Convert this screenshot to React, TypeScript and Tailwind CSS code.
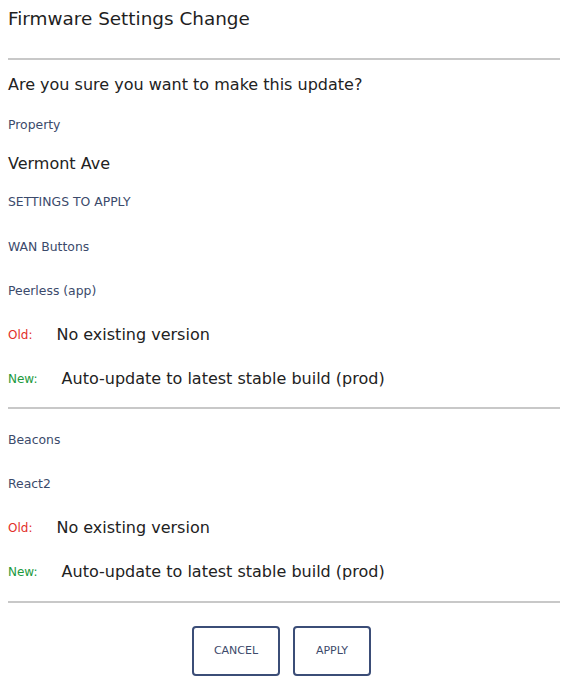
import React from "react";

const font = { fontFamily: '"DejaVu Sans", "Noto Sans", sans-serif' };

type Change = { device: string; model: string; oldValue: string; newValue: string };

const changes: Change[] = [
  { device: "WAN Buttons", model: "Peerless (app)", oldValue: "No existing version", newValue: "Auto-update to latest stable build (prod)" },
  { device: "Beacons", model: "React2", oldValue: "No existing version", newValue: "Auto-update to latest stable build (prod)" },
];

function Label({ children }: { children: React.ReactNode }) {
  return <span className="text-[12.4px] text-[#3b4a6b]">{children}</span>;
}

function ChangeBlock({ change }: { change: Change }) {
  return (
    <div>
      <div className="h-[44px] flex items-center"><Label>{change.device}</Label></div>
      <div className="h-[44px] flex items-center"><Label>{change.model}</Label></div>
      <div className="h-[44px] flex items-center">
        <span className="text-[12px] text-[#e2302a]">Old:</span>
        <span className="ml-6 text-[16px] text-[#222]">{change.oldValue}</span>
      </div>
      <div className="h-[44px] flex items-center">
        <span className="text-[12px] text-[#1d9a3c]">New:</span>
        <span className="ml-6 text-[16px] text-[#222]">{change.newValue}</span>
      </div>
    </div>
  );
}

export default function App() {
  return (
    <div className="w-[575px] h-[688px] bg-white pl-2 pr-[15px]" style={font}>
      {/* Header */}
      <h1 className="h-[38px] flex items-center text-[18.4px] text-[#1f1f1f] font-normal">Firmware Settings Change</h1>
      <div className="mt-[20px] h-[2px] bg-[#c8c8c8]" />

      <div className="h-[50px] flex items-center text-[16px] text-[#222]">Are you sure you want to make this update?</div>
      <div className="h-[31px] flex items-center"><Label>Property</Label></div>
      <div className="h-[45px] flex items-center text-[16px] text-[#222]">Vermont Ave</div>
      <div className="h-[33px] flex items-center"><Label>SETTINGS TO APPLY</Label></div>

      <div className="mt-[6px]">
        <ChangeBlock change={changes[0]} />
      </div>
      <div className="mt-[6px] h-[2px] bg-[#c8c8c8]" />

      <div className="mt-[9px]">
        <ChangeBlock change={changes[1]} />
      </div>
      <div className="mt-[7px] h-[2px] bg-[#c8c8c8]" />

      {/* Actions */}
      <div className="mt-[23px] flex justify-center gap-[13px] pr-[5px]">
        <button className="h-[50px] w-[88px] rounded-[4px] border-2 border-[#3b4d77] text-[11px] text-[#3d4a6b] bg-white">CANCEL</button>
        <button className="h-[50px] w-[78px] rounded-[4px] border-2 border-[#3b4d77] text-[11px] text-[#3d4a6b] bg-white">APPLY</button>
      </div>
    </div>
  );
}
